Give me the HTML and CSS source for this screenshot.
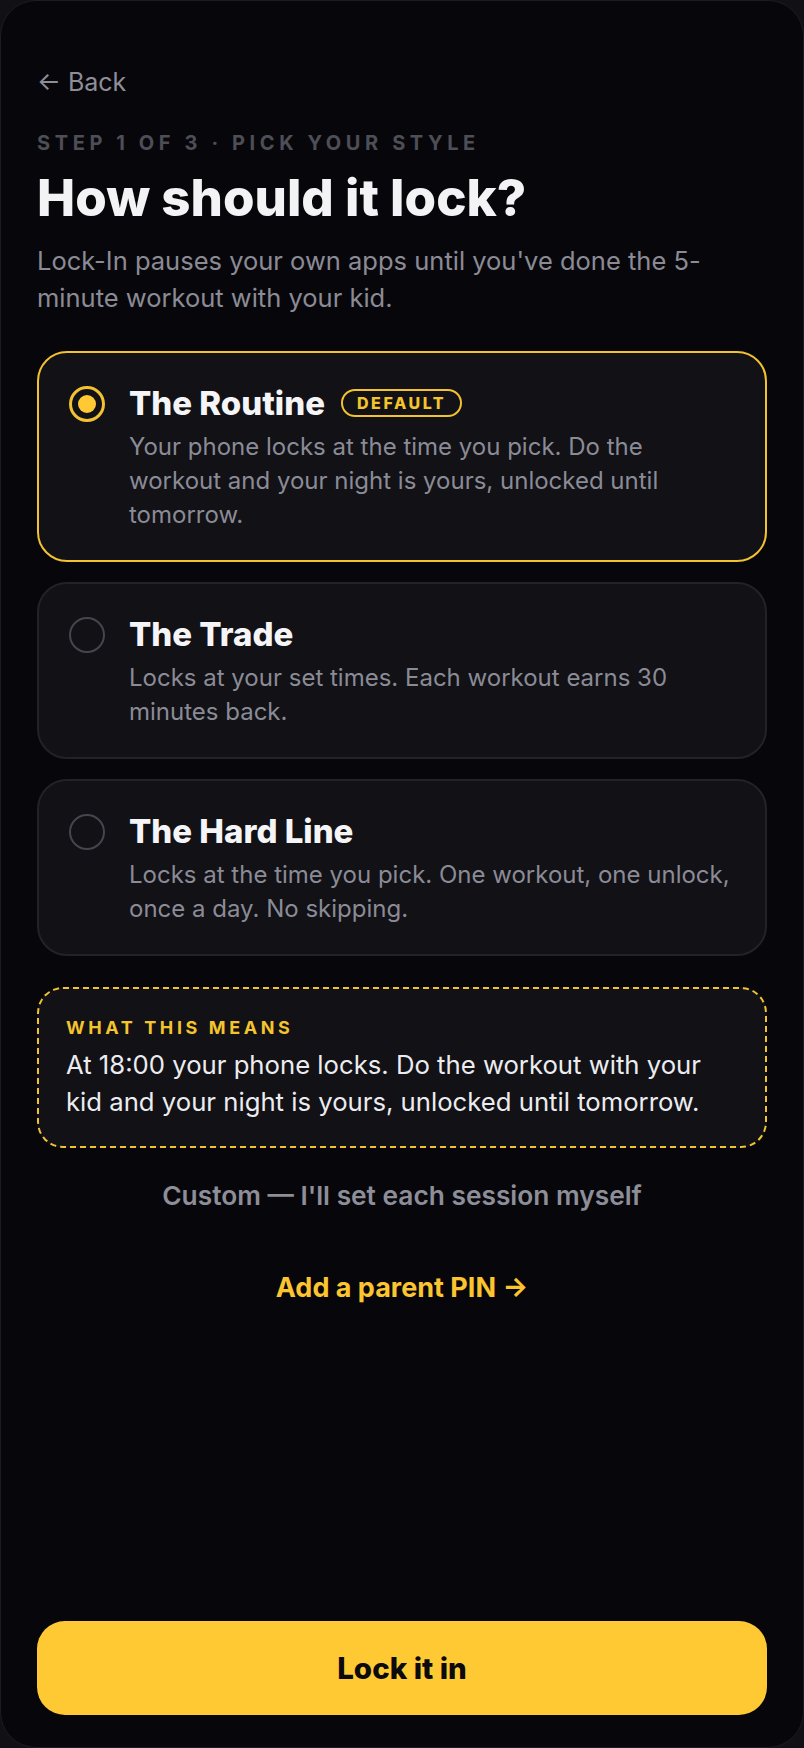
FILE: index.html
```html
<!DOCTYPE html>
<html lang="en">
<head>
  <meta charset="UTF-8" />
  <title>Lock-In · Pick your style</title>
  <link rel="stylesheet" href="styles.css">
</head>
<body>

  <div class="screen">

    <a class="back" href="#">&larr; Back</a>

    <p class="step">Step 1 of 3 · Pick your style</p>
    <h1>How should it lock?</h1>
    <p class="intro">Lock-In pauses your own apps until you've done the 5-minute workout with your kid.</p>

    <!-- Lock styles -->
    <div class="options">
      <div class="option selected">
        <span class="radio"></span>
        <div class="option-body">
          <div class="option-title">The Routine <span class="badge">Default</span></div>
          <p>Your phone locks at the time you pick. Do the workout and your night is yours, unlocked until tomorrow.</p>
        </div>
      </div>

      <div class="option">
        <span class="radio"></span>
        <div class="option-body">
          <div class="option-title">The Trade</div>
          <p>Locks at your set times. Each workout earns 30 minutes back.</p>
        </div>
      </div>

      <div class="option">
        <span class="radio"></span>
        <div class="option-body">
          <div class="option-title">The Hard Line</div>
          <p>Locks at the time you pick. One workout, one unlock, once a day. No skipping.</p>
        </div>
      </div>
    </div>

    <div class="means">
      <div class="means-label">What this means</div>
      <p>At 18:00 your phone locks. Do the workout with your kid and your night is yours, unlocked until tomorrow.</p>
    </div>

    <a class="custom" href="#">Custom — I'll set each session myself</a>
    <a class="pin" href="#">Add a parent PIN &rarr;</a>

    <button class="cta">Lock it in</button>
  </div>

</body>
</html>
```

FILE: styles.css
```css
body {
  margin: 0;
  background: #111115;
  font-family: Inter, 'Noto Sans', sans-serif;
  color: #f2f2f4;
}

.screen {
  box-sizing: border-box;
  min-height: 1748px;
  display: flex;
  flex-direction: column;
  padding: 63px 36px 32px;
  background: #07070b;
  border: 1px solid #1c1c22;
  border-radius: 36px;
}

a {
  text-decoration: none;
}

.back {
  align-self: flex-start;
  font-size: 25px;
  line-height: 36px;
  color: #8e8e99;
}

.step {
  margin: 29px 0 0;
  font-size: 20px;
  line-height: 28px;
  font-weight: 700;
  letter-spacing: 0.23em;
  text-transform: uppercase;
  color: #4e4e57;
}

h1 {
  margin: 13px 0 0;
  font-size: 51px;
  line-height: 56px;
  font-weight: 800;
  color: #f3f3f5;
}

.intro {
  margin: 16px 0 0;
  font-size: 25.5px;
  line-height: 37px;
  color: #8b8b96;
}

.options {
  display: flex;
  flex-direction: column;
  gap: 20px;
  margin-top: 35px;
}

.option {
  display: flex;
  align-items: flex-start;
  gap: 24px;
  padding: 30px 30px 28px;
  background: #111116;
  border: 2px solid #222228;
  border-radius: 30px;
}

.option.selected {
  border-color: #f2c230;
}

.radio {
  flex: none;
  box-sizing: border-box;
  width: 36px;
  height: 36px;
  margin-top: 3px;
  border: 2px solid #45454d;
  border-radius: 50%;
  display: flex;
  align-items: center;
  justify-content: center;
}

.selected .radio {
  border: 3px solid #f2c230;
}

.selected .radio::after {
  content: '';
  width: 18px;
  height: 18px;
  border-radius: 50%;
  background: #ffc933;
}

.option-title {
  display: flex;
  align-items: center;
  gap: 16px;
  font-size: 33px;
  line-height: 40px;
  font-weight: 800;
  color: #f5f5f7;
}

.badge {
  box-sizing: border-box;
  height: 28px;
  padding: 0 14px;
  border: 2px solid #f2c230;
  border-radius: 14px;
  font-size: 16px;
  line-height: 24px;
  font-weight: 800;
  letter-spacing: 0.16em;
  text-transform: uppercase;
  color: #f5c42c;
}

.option-body p {
  margin: 7px 0 0;
  font-size: 24px;
  line-height: 34px;
  color: #8b8b96;
}

.means {
  margin-top: 31px;
  padding: 27px 50px 26px 27px;
  background: #111116;
  border: 2px dashed #f2c230;
  border-radius: 26px;
}

.means-label {
  font-size: 18px;
  line-height: 24px;
  font-weight: 700;
  letter-spacing: 0.2em;
  text-transform: uppercase;
  color: #f5c42c;
}

.means p {
  margin: 6px 0 0;
  font-size: 25.7px;
  line-height: 37px;
  color: #ececf0;
}

.custom {
  margin-top: 32px;
  text-align: center;
  font-size: 26.3px;
  line-height: 32px;
  font-weight: 600;
  color: #8e8e99;
}

.pin {
  margin-top: 60px;
  text-align: center;
  font-size: 27px;
  line-height: 32px;
  font-weight: 700;
  color: #fcc530;
}

.cta {
  margin-top: auto;
  height: 94px;
  border: none;
  border-radius: 28px;
  background: #ffc933;
  font-family: inherit;
  font-size: 29.5px;
  font-weight: 800;
  color: #0b0b0d;
  cursor: pointer;
}
```
